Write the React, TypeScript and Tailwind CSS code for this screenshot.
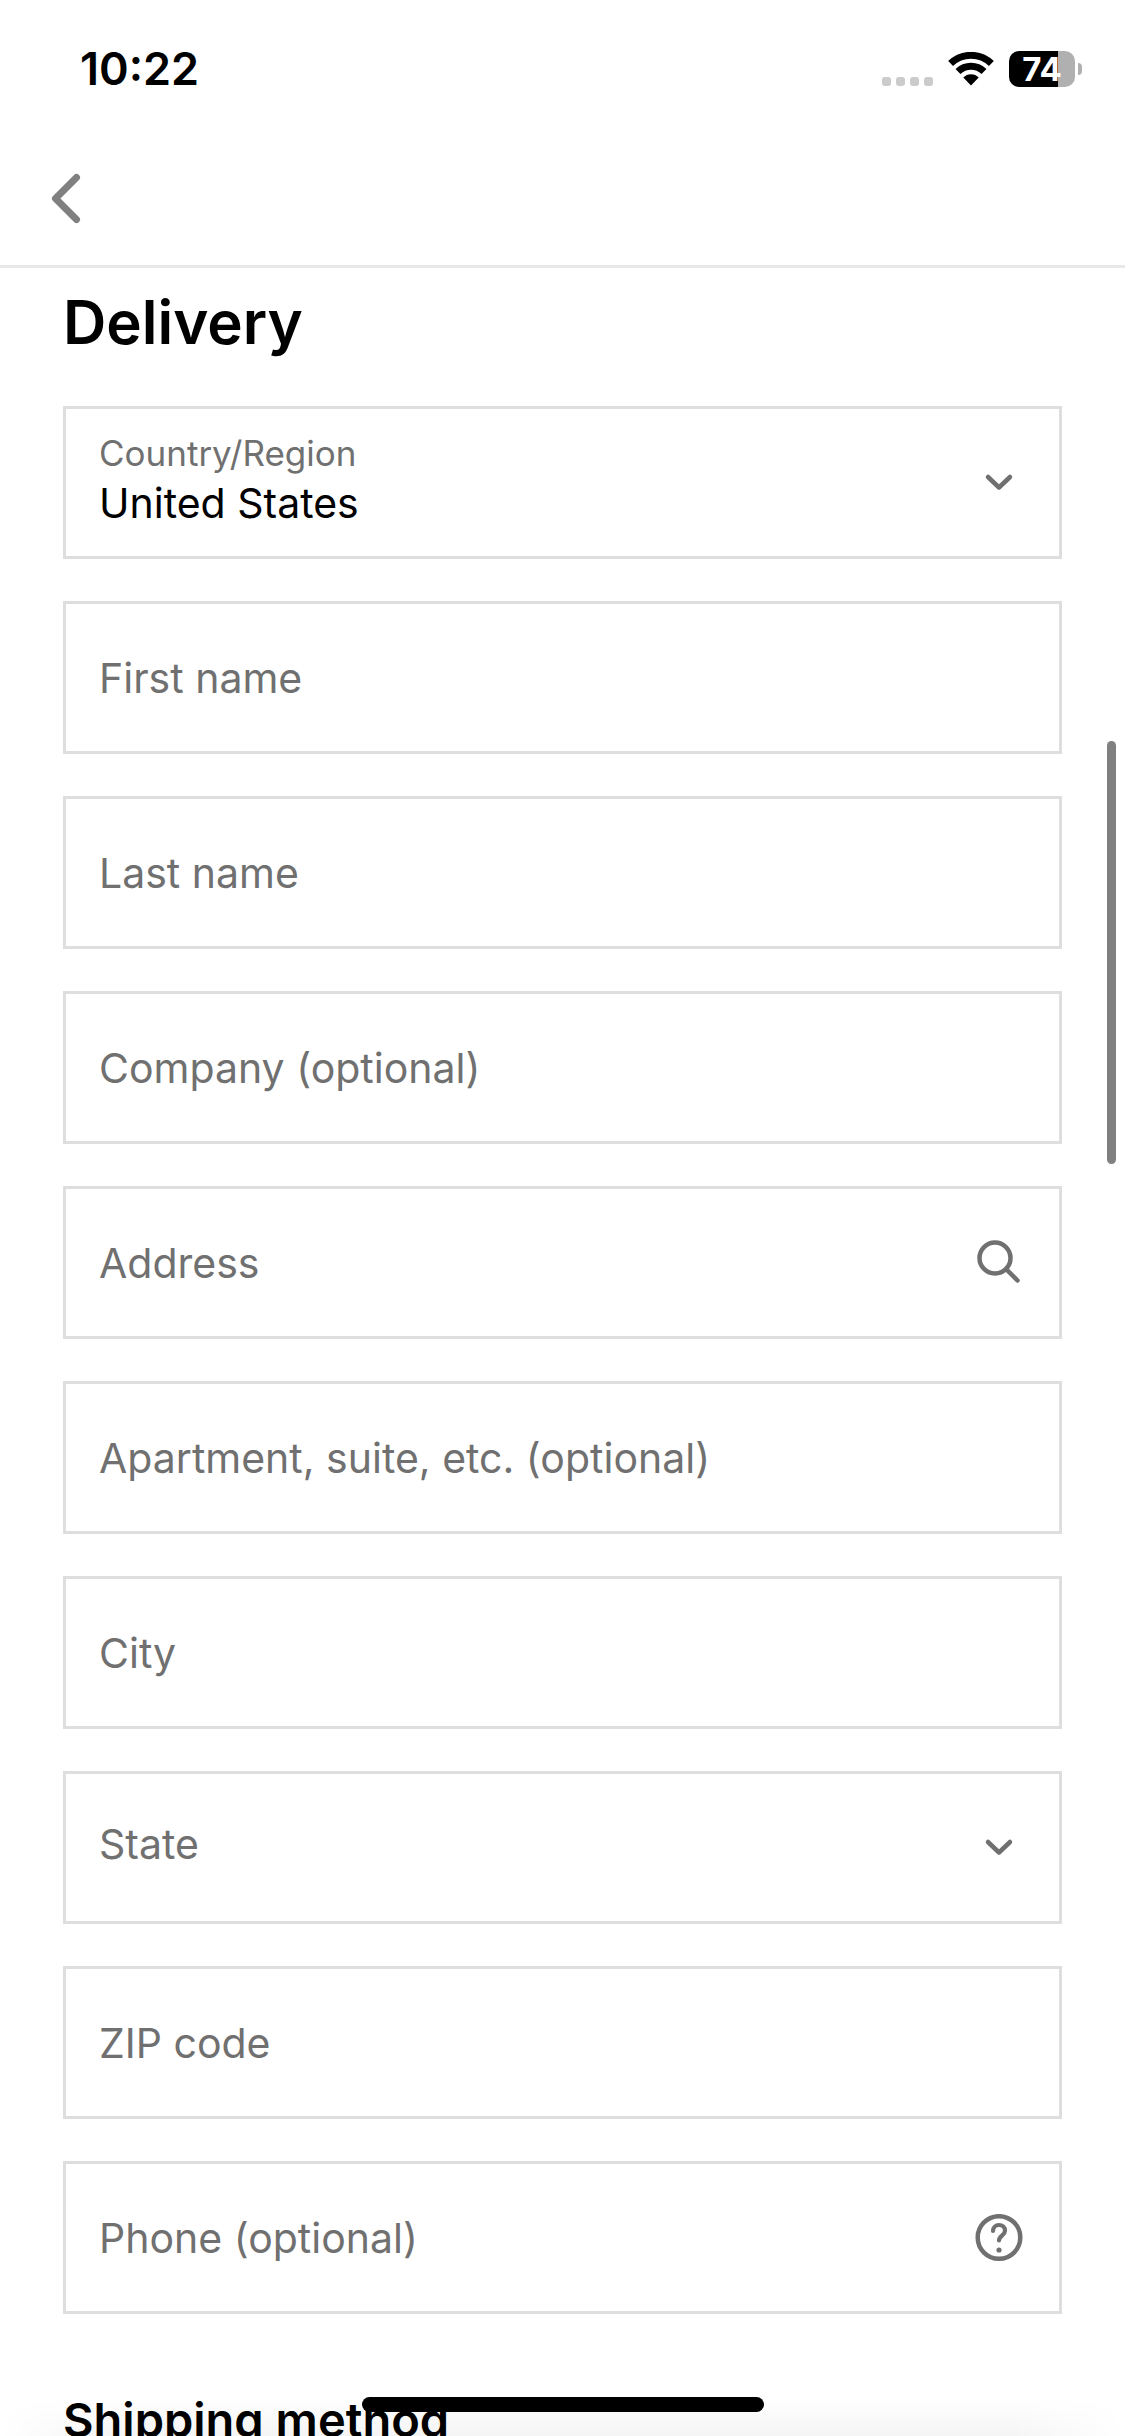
import { useState } from 'react';
import type { ReactNode } from 'react';

interface FieldProps {
  id: string;
  label: string;
  type?: string;
  autoComplete?: string;
  icon?: ReactNode;
}

interface SelectFieldProps {
  id: string;
  label: string;
  options: string[];
  value: string;
  onChange: (value: string) => void;
}

const countries = ['United States', 'Canada', 'Mexico', 'United Kingdom'];
const states = ['California', 'Florida', 'New York', 'Texas', 'Washington'];

function WifiIcon() {
  return (
    <svg viewBox="0 0 46 34" className="w-[46px] h-[34px]" aria-hidden="true">
      <path d="M23 33.500 15.300 25.600a10.300 10.300 0 0 1 15.400 0Z" fill="#000" />
      <path d="M10 19.500a18.700 18.700 0 0 1 26 0" fill="none" stroke="#000" strokeWidth="7" />
      <path d="M2.600 11.600a29.300 29.300 0 0 1 40.800 0" fill="none" stroke="#000" strokeWidth="7" />
    </svg>
  );
}

function StatusBar() {
  return (
    <div className="flex items-center justify-between h-[132px] pt-1.5 pl-20 pr-[43px]">
      <span className="text-[45px] leading-[48px] font-semibold">10:22</span>
      <div className="flex items-center">
        <div className="flex gap-[5px] pt-6 mr-[15px]">
          <span className="size-[9px] rounded-[3px] bg-[#cbcbcb]" />
          <span className="size-[9px] rounded-[3px] bg-[#cbcbcb]" />
          <span className="size-[9px] rounded-[3px] bg-[#cbcbcb]" />
          <span className="size-[9px] rounded-[3px] bg-[#cbcbcb]" />
        </div>
        <WifiIcon />
        <div className="flex items-center ml-[15px] gap-[3px]">
          <div className="flex items-center justify-center w-[66px] h-9 rounded-[10px] bg-linear-to-r from-black from-74% to-[#b0b0b0] to-74% text-white text-[33px] leading-9 font-bold">
            74
          </div>
          <span className="w-1 h-3 rounded-r-full bg-[#b0b0b0]" />
        </div>
      </div>
    </div>
  );
}

function ChevronDown() {
  return (
    <svg
      viewBox="0 0 42 42"
      className="absolute right-[39px] top-[51px] size-[42px] pointer-events-none"
      aria-hidden="true"
    >
      <path
        d="m10 17 11 10.500 11-10.500"
        fill="none"
        stroke="#707070"
        strokeWidth="4.500"
        strokeLinecap="round"
        strokeLinejoin="round"
      />
    </svg>
  );
}

function SearchIcon() {
  return (
    <svg viewBox="0 0 48 48" className="size-12 shrink-0" aria-hidden="true">
      <g fill="none" stroke="#707070" strokeWidth="4.500" strokeLinecap="round">
        <circle cx="20" cy="19" r="15.500" />
        <path d="m31.500 30.500 11 11" />
      </g>
    </svg>
  );
}

function HelpIcon() {
  return (
    <svg viewBox="0 0 48 48" className="size-12" aria-hidden="true">
      <g fill="none" stroke="#707070" strokeLinecap="round" strokeLinejoin="round">
        <circle cx="24" cy="23.500" r="21.300" strokeWidth="4.500" />
        <path d="M18 17c0-3.600 2.600-6 6-6s6 2.400 6 5.700c0 4.600-6 5.200-6 9.800" strokeWidth="4.200" />
      </g>
      <circle cx="24" cy="36" r="2.600" fill="#707070" />
    </svg>
  );
}

// The label fills the empty field and moves up once there is a value
function TextField({ id, label, type = 'text', autoComplete, icon }: FieldProps) {
  return (
    <div className="relative flex items-center h-[153px] pr-9 border-[3px] border-[#dedede] bg-white">
      <input
        id={id}
        name={id}
        type={type}
        autoComplete={autoComplete}
        placeholder=" "
        className="peer flex-1 min-w-0 h-full pl-[33px] text-[41px] outline-none not-placeholder-shown:pt-11"
      />
      <label
        htmlFor={id}
        className="absolute left-[33px] top-12 text-[41px] leading-[52px] text-[#707070] pointer-events-none peer-[:not(:placeholder-shown)]:top-[22px] peer-[:not(:placeholder-shown)]:text-[35px] peer-[:not(:placeholder-shown)]:leading-[44px]"
      >
        {label}
      </label>
      {icon}
    </div>
  );
}

function SelectField({ id, label, options, value, onChange }: SelectFieldProps) {
  return (
    <div className="relative h-[153px] border-[3px] border-[#dedede] bg-white">
      <select
        id={id}
        name={id}
        value={value}
        onChange={(e) => onChange(e.target.value)}
        className="w-full h-full pt-[43px] pl-[33px] pr-24 text-[41px] text-black appearance-none outline-none"
      >
        {!value && <option value="" />}
        {options.map((option) => (
          <option key={option} value={option}>
            {option}
          </option>
        ))}
      </select>
      <label
        htmlFor={id}
        className={`absolute left-[33px] text-[#707070] pointer-events-none ${
          value ? 'top-[22px] text-[35px] leading-[44px]' : 'top-11 text-[41px] leading-[52px]'
        }`}
      >
        {label}
      </label>
      <ChevronDown />
    </div>
  );
}

export default function App() {
  const [country, setCountry] = useState('United States');
  const [state, setState] = useState('');

  return (
    <div className="relative flex flex-col h-screen overflow-hidden bg-white text-black font-['Inter',sans-serif]">
      <header className="shrink-0 border-b-[3px] border-[#e8e8e8]">
        <StatusBar />
        <div className="flex items-center h-[133px] px-8">
          <button type="button" aria-label="Go back" className="flex items-center justify-center size-16">
            <svg viewBox="0 0 64 64" className="size-16" aria-hidden="true">
              <path
                d="M44.500 10.500 23.500 31.500 44.500 52.500"
                fill="none"
                stroke="#808080"
                strokeWidth="7"
                strokeLinecap="round"
                strokeLinejoin="round"
              />
            </svg>
          </button>
        </div>
      </header>

      <main className="flex-1 min-h-0 overflow-hidden px-[63px] pt-4">
        <form className="flex flex-col gap-[42px]" onSubmit={(e) => e.preventDefault()}>
          <h1 className="pb-1 text-[60px] leading-[76px] font-semibold">Delivery</h1>
          <SelectField
            id="country"
            label="Country/Region"
            options={countries}
            value={country}
            onChange={setCountry}
          />
          <TextField id="firstName" label="First name" autoComplete="given-name" />
          <TextField id="lastName" label="Last name" autoComplete="family-name" />
          <TextField id="company" label="Company (optional)" autoComplete="organization" />
          <TextField id="address" label="Address" autoComplete="address-line1" icon={<SearchIcon />} />
          <TextField id="apartment" label="Apartment, suite, etc. (optional)" autoComplete="address-line2" />
          <TextField id="city" label="City" autoComplete="address-level2" />
          <SelectField id="state" label="State" options={states} value={state} onChange={setState} />
          <TextField id="zip" label="ZIP code" autoComplete="postal-code" />
          <TextField
            id="phone"
            label="Phone (optional)"
            type="tel"
            autoComplete="tel"
            icon={
              <button type="button" aria-label="More information" className="shrink-0">
                <HelpIcon />
              </button>
            }
          />
        </form>
        <h2 className="mt-[78px] text-[47px] leading-[56px] font-semibold whitespace-nowrap">Shipping method</h2>
      </main>

      {/* Scroll position */}
      <div className="absolute right-[9px] top-[741px] w-[9px] h-[423px] rounded-full bg-[#808080]" />

      {/* Home indicator */}
      <div className="absolute inset-x-0 bottom-0 flex justify-center items-start h-[39px] bg-linear-to-b from-transparent to-black/4 mask-x-from-90% pointer-events-none">
        <div className="w-[402px] h-[15px] rounded-full bg-black" />
      </div>
    </div>
  );
}
